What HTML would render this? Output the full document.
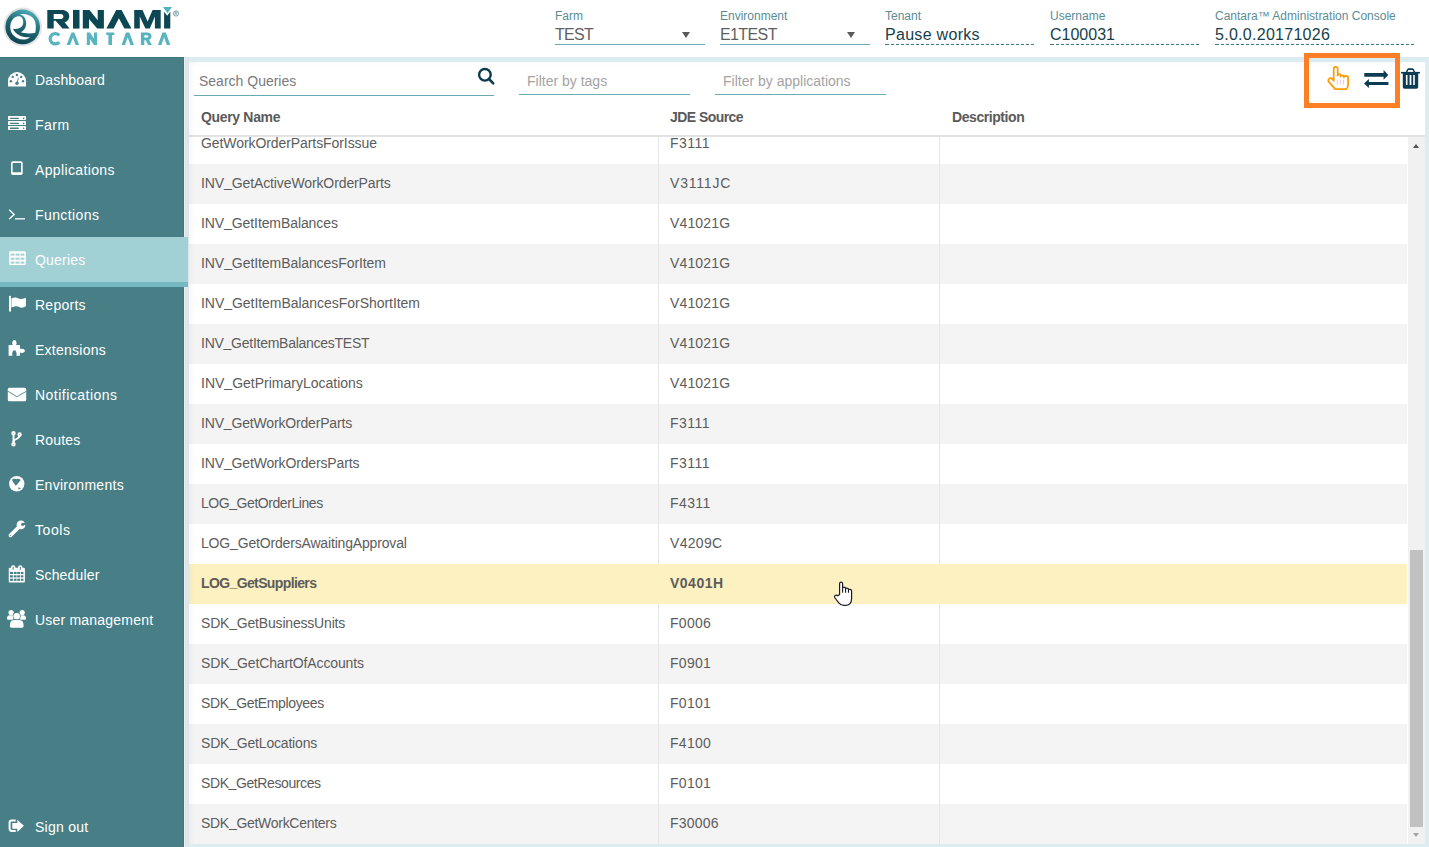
<!DOCTYPE html>
<html><head><meta charset="utf-8">
<style>
*{margin:0;padding:0;box-sizing:border-box}
html,body{width:1429px;height:847px;overflow:hidden;background:#fff;font-family:"Liberation Sans",sans-serif;position:relative}
.abs{position:absolute}
#header{left:0;top:0;width:1429px;height:57px;background:#fff}
.fld{position:absolute;top:0;height:57px;width:150px}
.fld .lbl{position:absolute;left:0;top:9px;font-size:12px;line-height:14px;color:#5b8c96;white-space:nowrap}
.fld .val{position:absolute;left:0;top:25px;font-size:16px;line-height:19px;color:#5f5f5f;white-space:nowrap}
.fld .ul{position:absolute;left:0;right:0;top:44px;height:1px;background:#69aab3}
.fld .dl{position:absolute;left:0;right:0;top:44px;height:1px;background:linear-gradient(#3f7a80,#3f7a80) 0 0/4px 1px no-repeat,repeating-linear-gradient(90deg,#3f7a80 0 3px,transparent 3px 5px) 6px 0/calc(100% - 6px) 1px no-repeat}
.fld .val.dk{color:#153f4c}
.tri{position:absolute;top:32px;width:0;height:0;border-left:4px solid transparent;border-right:4px solid transparent;border-top:6px solid #5a5a5a}

#sidebar{z-index:5;left:0;top:57px;width:184px;height:790px;background:#487f87;border-right:1px solid #3f7880;box-shadow:inset 0 1px 0 #3c757d}
.nav{position:absolute;left:0;width:184px;height:45px;color:#fff;font-size:14px;letter-spacing:0.33px}
.nav span{position:absolute;left:35px;top:15px;line-height:17px;white-space:nowrap}
.nav svg{position:absolute;left:7px;top:13px}
.nav.active{background:#a1d0d5;width:188px;height:50px;border-bottom:5px solid #74b8c2;z-index:2}

#frame{left:184px;top:57px;width:1245px;height:790px;background:#dcedf1}
#frame .lstrip{position:absolute;left:1px;top:0;width:4px;height:790px;background:#dde6e9}
#frame .lline{position:absolute;left:0;top:0;width:1px;height:790px;background:#ededed}
#shade{left:189px;top:62px;width:1236px;height:782px;pointer-events:none;box-shadow:inset 6px 4px 6px -4px rgba(0,0,0,0.045);z-index:3}
#content{left:189px;top:62px;width:1236px;height:782px;background:#fff;overflow:hidden}

.inp{position:absolute;top:0;height:34px}
.inp .ph{position:absolute;left:6px;top:11px;font-size:14px;line-height:16px;color:#7a7a7a;white-space:nowrap}
.inp .ul{position:absolute;left:0;right:0;top:33px;height:1px;background:#69aab3}
.inp .ph.lt{color:#a3a3a3}

.th{position:absolute;top:47px;font-size:14px;font-weight:bold;color:#5a5a5a;line-height:16px;white-space:nowrap}
#thline{left:0;top:73px;width:1236px;height:2px;background:#e3e3e3}

#rows{left:0;top:75px;width:1218px;height:707px;overflow:hidden}
.row{position:absolute;left:0;width:1218px;height:40px;font-size:14px;color:#5c5c5c}
.row.g{background:#f4f4f4}
.row.y{background:#fdf0c1;font-weight:bold}
.row span{position:absolute;top:11px;line-height:16px;white-space:nowrap}
.c1{left:12px}.u{font-style:normal;position:relative;top:-1px}.c2{left:481px}
.vl{position:absolute;top:0;width:1px;height:40px;background:#e6e6e6}
#sb{left:1219px;top:75px;width:17px;height:707px;background:#f1f1f1}
#thumb{left:1221px;top:488px;width:13px;height:277px;background:#c1c1c1}
</style></head>
<body>
<div id="header" class="abs">
  <!-- logo -->
  <svg class="abs" style="left:0;top:0" width="190" height="57" viewBox="0 0 190 57">
    <defs><linearGradient id="lg" x1="0.7" y1="0" x2="0.3" y2="1"><stop offset="0" stop-color="#4eb0ba"/><stop offset="0.45" stop-color="#1f6b76"/><stop offset="1" stop-color="#0d4350"/></linearGradient></defs>
    <circle cx="22.7" cy="26.8" r="19.3" fill="#e2e2e2"/>
    <circle cx="22.7" cy="26.9" r="17.3" fill="url(#lg)"/>
    <path d="M13 28.7 C15.5 34.5 22 37.8 30.2 37.2 C27.5 39.2 25 39.5 22.7 39.5 A12.5 12.5 0 0 1 10.2 27 A12.5 12.5 0 0 1 14.2 17.8 C16 16.3 18.6 15.9 20.3 16.4 C23 17.6 23.6 21 23.1 23.8 C22.3 27.5 18.5 29.6 13 28.7 Z" fill="#fff"/>
    <path d="M20 14.3 C24 13.4 30.5 14.5 33.8 19 C36 22 36.3 28 35.3 32.8 C31 33.7 25 33.7 20.8 32.3 C24.5 30.5 26.4 26.5 26.2 22.5 C26 18.5 23.5 15.6 20 14.3 Z" fill="#fff"/>
    <g fill="#0e4754">
      <path fill-rule="evenodd" d="M47.3 28.6 V9.9 H61.8 C66.3 9.9 69.3 12.5 69.3 16.2 C69.3 19.2 67.5 21.4 64.6 22.3 L69.6 28.6 H62.4 L55.6 20.8 H53.7 V28.6 Z M53.7 14.1 H60.8 C62.4 14.1 63.4 15 63.4 16.5 C63.4 18 62.4 19.1 60.8 19.1 H53.7 Z"/>
      <path d="M73 9.9 H79.5 V28.6 H73 Z"/>
      <path d="M82.8 28.6 V9.9 H89.5 L97.7 20.2 V9.9 H103.9 V28.6 H97.2 L89 18.9 V28.6 Z"/>
      <path d="M106.4 28.6 L116.2 9.9 H121.6 L131.4 28.6 H124.4 L118.9 18.3 L113.7 28.6 Z"/>
      <path d="M134.2 28.6 V9.9 H142.5 L147.6 21.6 L152.6 9.9 H160.7 V28.6 H154.9 V16.6 L149.8 28.6 H145.4 L139.8 16.6 V28.6 Z"/>
      <path d="M164.1 11.8 L167.2 15.8 L170.3 11.8 V28.6 H164.1 Z"/>
    </g>
    <path d="M163 7.1 H172 L167.5 13.2 Z" fill="#4fb3bf"/>
    <circle cx="176" cy="13.5" r="2.6" fill="none" stroke="#6a9ba4" stroke-width="0.9"/>
    <path d="M175.1 15.1 V11.9 H176.4 C177.3 11.9 177.3 13.4 176.4 13.4 H175.1 M176.2 13.4 L177.1 15.1" fill="none" stroke="#6a9ba4" stroke-width="0.7"/>
    <g fill="#58b4bf">
      <path d="M59.3 35.4 A5.2 5.2 0 1 0 59.3 42.1" fill="none" stroke="#58b4bf" stroke-width="3.2"/>
      <path d="M66.6 44.9 L71.5 32.5 H74.3 L79.2 44.9 H75.6 L72.9 37.6 L70.2 44.9 Z"/>
      <path d="M86.8 44.9 V32.5 H90 L94 38.5 V32.5 H97.1 V44.9 H93.9 L89.9 38.9 V44.9 Z"/>
      <path d="M106.2 32.6 H114.3 V35.1 H112 V44.9 H108.4 V35.1 H106.2 Z"/>
      <path d="M121.6 44.9 L126 32.5 H129.4 L133.9 44.9 H130.4 L127.7 37.3 L125 44.9 Z"/>
      <path fill-rule="evenodd" d="M140.9 44.9 V32.5 H147.3 C149.9 32.5 151.5 34 151.5 36.3 C151.5 38 150.6 39.2 149 39.8 L151.9 44.9 H148.1 L145.7 40.3 H144.3 V44.9 Z M144.3 35.2 H147 C147.9 35.2 148.3 35.7 148.3 36.4 C148.3 37.1 147.9 37.6 147 37.6 H144.3 Z"/>
      <path d="M158 44.9 L162.4 32.5 H165.9 L170.3 44.9 H166.8 L164.1 37.3 L161.4 44.9 Z"/>
    </g>
  </svg>
  <div class="fld" style="left:555px"><div class="lbl">Farm</div><div class="val" style="letter-spacing:-0.7px">TEST</div><div class="tri" style="left:127px"></div><div class="ul"></div></div>
  <div class="fld" style="left:720px"><div class="lbl">Environment</div><div class="val" style="letter-spacing:-0.6px">E1TEST</div><div class="tri" style="left:127px"></div><div class="ul"></div></div>
  <div class="fld" style="left:885px"><div class="lbl">Tenant</div><div class="val dk" style="letter-spacing:0.3px">Pause works</div><div class="dl"></div></div>
  <div class="fld" style="left:1050px"><div class="lbl">Username</div><div class="val dk">C100031</div><div class="dl"></div></div>
  <div class="fld" style="left:1215px;width:200px"><div class="lbl">Cantara™ Administration Console</div><div class="val dk" style="letter-spacing:0.28px">5.0.0.20171026</div><div class="dl"></div></div>
</div>

<div id="sidebar" class="abs">
<div class="nav" style="top:0px"><svg width="34" height="45" viewBox="0 0 34 45" style="left:0;top:0"><path d="M8 29.4 L8 24 A9 8.9 0 0 1 26 24 L26 29.4 Z" fill="#fff"/><circle cx="12.7" cy="19.9" r="1.2" fill="#487f87"/><circle cx="16.9" cy="18" r="1.2" fill="#487f87"/><circle cx="21.2" cy="19.9" r="1.2" fill="#487f87"/><circle cx="10.9" cy="24.2" r="1.2" fill="#487f87"/><circle cx="23" cy="24.2" r="1.2" fill="#487f87"/><path d="M16.6 26 L18.1 20.6 L18.8 20.8 L17.6 26.3 Z" fill="#487f87"/><circle cx="17" cy="26.2" r="1.7" fill="#487f87"/></svg><span style="letter-spacing:0.16px">Dashboard</span></div>
<div class="nav" style="top:45px"><svg width="34" height="45" viewBox="0 0 34 45" style="left:0;top:0"><rect x="8" y="14" width="18" height="4" rx="0.4" fill="#fff"/><rect x="8" y="19" width="18" height="4" rx="0.4" fill="#fff"/><rect x="8" y="24" width="18" height="4" rx="0.4" fill="#fff"/><g fill="#487f87"><rect x="9.8" y="15.7" width="9.2" height="1.4" rx="0.7"/><rect x="9.8" y="20.7" width="9.2" height="1.4" rx="0.7"/><rect x="9.8" y="25.6" width="9.2" height="1.4" rx="0.7"/><circle cx="23.6" cy="16.4" r="0.8"/><circle cx="23.6" cy="21.4" r="0.8"/><circle cx="23.6" cy="26.3" r="0.8"/></g></svg><span style="letter-spacing:0.5px">Farm</span></div>
<div class="nav" style="top:90px"><svg width="34" height="45" viewBox="0 0 34 45" style="left:0;top:0"><rect x="11.8" y="15.1" width="10.1" height="11.9" rx="1.2" fill="none" stroke="#fff" stroke-width="1.6"/><rect x="11.5" y="25.3" width="10.8" height="2.4" rx="1" fill="#fff"/></svg><span style="letter-spacing:0.36px">Applications</span></div>
<div class="nav" style="top:135px"><svg width="34" height="45" viewBox="0 0 34 45" style="left:0;top:0"><path d="M9.2 17.8 L14.2 22.4 L9.2 27" fill="none" stroke="#fff" stroke-width="1.3"/><rect x="15" y="26.2" width="10" height="1.3" fill="#fff"/></svg><span style="letter-spacing:0.41px">Functions</span></div>
<div class="nav active" style="top:180px"><svg width="34" height="45" viewBox="0 0 34 45" style="left:0;top:0"><rect x="9.2" y="14.3" width="16.6" height="13.6" rx="1.2" fill="#fff"/><g fill="#a1d0d5"><rect x="10.7" y="16.6" width="3.7" height="2"/><rect x="15.5" y="16.6" width="4.1" height="2"/><rect x="20.6" y="16.6" width="3.7" height="2"/><rect x="10.7" y="20.7" width="3.7" height="2"/><rect x="15.5" y="20.7" width="4.1" height="2"/><rect x="20.6" y="20.7" width="3.7" height="2"/><rect x="10.7" y="24.6" width="3.7" height="2"/><rect x="15.5" y="24.6" width="4.1" height="2"/><rect x="20.6" y="24.6" width="3.7" height="2"/></g></svg><span style="letter-spacing:0.2px">Queries</span></div>
<div class="nav" style="top:225px"><svg width="34" height="45" viewBox="0 0 34 45" style="left:0;top:0"><rect x="9" y="14.6" width="2" height="14.9" rx="0.5" fill="#fff"/><circle cx="10" cy="14.8" r="1.1" fill="#fff"/><path d="M11.4 16.5 C13.5 15.6 15 15.4 16.6 15.8 C18.5 16.3 19.8 17.3 21.5 17.1 C23 16.9 24.5 16.2 25.9 15.8 L25.9 24.3 C24.5 24.9 23 25.9 21.5 25.8 C19.8 25.7 18.5 24.5 16.6 24.3 C15 24.2 13.5 24.8 11.4 25.6 Z" fill="#fff"/></svg><span style="letter-spacing:0.25px">Reports</span></div>
<div class="nav" style="top:270px"><svg width="34" height="45" viewBox="0 0 34 45" style="left:0;top:0"><path d="M8.6 18 H12.9 C12.4 17.5 12.2 17 12.2 16.2 C12.2 14.6 13.2 13 14.4 13 C15.6 13 16.6 14.6 16.6 16.2 C16.6 17 16.4 17.5 15.9 18 H20 V22.1 C20.5 21.8 21 21.7 21.9 21.7 C23.5 21.7 24.9 22.5 24.9 23.8 C24.9 25.1 23.5 25.9 21.9 25.9 C21 25.9 20.5 25.8 20 25.5 V28.8 H16.2 C16.5 28.2 16.6 27.6 16.6 26.9 C16.6 24.9 15.6 23.2 14.4 23.2 C13.2 23.2 12.2 24.9 12.2 26.9 C12.2 27.6 12.3 28.2 12.6 28.8 H8.6 Z" fill="#fff"/></svg><span style="letter-spacing:0.26px">Extensions</span></div>
<div class="nav" style="top:315px"><svg width="34" height="45" viewBox="0 0 34 45" style="left:0;top:0"><rect x="7.8" y="15.7" width="18.4" height="13.6" rx="1.6" fill="#fff"/><path d="M7.8 19.2 L16.9 24.7 L26.2 19.4" fill="none" stroke="#487f87" stroke-width="0.9"/></svg><span style="letter-spacing:0.48px">Notifications</span></div>
<div class="nav" style="top:360px"><svg width="34" height="45" viewBox="0 0 34 45" style="left:0;top:0"><g fill="none" stroke="#fff"><circle cx="13.5" cy="16.3" r="1.3" stroke-width="1.8"/><circle cx="19.6" cy="17.5" r="1.3" stroke-width="1.8"/><circle cx="13.5" cy="27.3" r="1.3" stroke-width="1.8"/><path d="M13.5 17.5 V26" stroke-width="1.9"/><path d="M19.5 18.8 C19.5 22.5 13.5 21.5 13.5 25" stroke-width="1.9"/></g></svg><span style="letter-spacing:0.18px">Routes</span></div>
<div class="nav" style="top:405px"><svg width="34" height="45" viewBox="0 0 34 45" style="left:0;top:0"><circle cx="16.75" cy="21.8" r="7.7" fill="#fff"/><path d="M12.1 18 C12.8 16.6 14.8 16.4 16.5 17.2 C17.6 16.4 19.2 16.7 20.8 18 L18.2 21 C17.4 22 16.6 23 15.8 23.8 C14.6 21.7 12.4 19.6 12.1 18 Z" fill="#487f87"/><path d="M18.2 25.3 L21 26.2 L18.5 27.4 Z" fill="#487f87"/></svg><span style="letter-spacing:0.28px">Environments</span></div>
<div class="nav" style="top:450px"><svg width="34" height="45" viewBox="0 0 34 45" style="left:0;top:0"><path d="M18.6 20.4 L10.4 28.4" stroke="#fff" stroke-width="3.6" stroke-linecap="round"/><circle cx="21" cy="17.9" r="4.4" fill="#fff"/><circle cx="22.7" cy="17.3" r="1.6" fill="#487f87"/><path d="M22.7 17.3 L26.5 14 L26.8 18.8 Z" fill="#487f87"/><circle cx="10.2" cy="28.5" r="0.6" fill="#487f87"/></svg><span style="letter-spacing:0.6px">Tools</span></div>
<div class="nav" style="top:495px"><svg width="34" height="45" viewBox="0 0 34 45" style="left:0;top:0"><rect x="8.75" y="15.8" width="16.15" height="14.7" rx="1" fill="#fff"/><rect x="11" y="13.2" width="4.3" height="4" rx="2" fill="#fff"/><rect x="18.1" y="13.2" width="4.3" height="4" rx="2" fill="#fff"/><g fill="#487f87"><rect x="10" y="19.9" width="3" height="2.1"/><rect x="13.8" y="19.9" width="2.8" height="2.1"/><rect x="17.2" y="19.9" width="3" height="2.1"/><rect x="21" y="19.9" width="2.4" height="2.1"/><rect x="10" y="23.3" width="3" height="2.1"/><rect x="13.8" y="23.3" width="2.8" height="2.1"/><rect x="17.2" y="23.3" width="3" height="2.1"/><rect x="21" y="23.3" width="2.4" height="2.1"/><rect x="10" y="26.7" width="3" height="2.1"/><rect x="13.8" y="26.7" width="2.8" height="2.1"/><rect x="17.2" y="26.7" width="3" height="2.1"/><rect x="21" y="26.7" width="2.4" height="2.1"/><rect x="12.7" y="14.4" width="1" height="3.4" rx="0.5"/><rect x="19.8" y="14.4" width="1" height="3.4" rx="0.5"/></g></svg><span style="letter-spacing:0.16px">Scheduler</span></div>
<div class="nav" style="top:540px"><svg width="34" height="45" viewBox="0 0 34 45" style="left:0;top:0"><circle cx="11.1" cy="15.5" r="2.6" fill="#fff"/><circle cx="22.2" cy="15.5" r="2.6" fill="#fff"/><path d="M7 21.5 C7 19.2 8 18.2 9.8 18.2 L13.5 18.2 L13.5 22.8 L8.3 22.8 C7.5 22.8 7 22.3 7 21.5 Z" fill="#fff"/><path d="M26 21.5 C26 19.2 25 18.2 23.2 18.2 L19.5 18.2 L19.5 22.8 L24.7 22.8 C25.5 22.8 26 22.3 26 21.5 Z" fill="#fff"/><circle cx="16.7" cy="19.3" r="3.9" fill="#487f87"/><circle cx="16.7" cy="19.3" r="3.3" fill="#fff"/><path d="M9.9 29 C9.9 25 11 23 13.5 23 L19.9 23 C22.4 23 23.6 25 23.6 29 C23.6 30.2 22.9 30.8 21.8 30.8 L11.7 30.8 C10.6 30.8 9.9 30.2 9.9 29 Z" fill="#fff"/><path d="M12.6 22.6 H20.8" stroke="#487f87" stroke-width="0.6"/></svg><span style="letter-spacing:0.21px">User management</span></div>
<div class="nav" style="top:747px"><svg width="34" height="45" viewBox="0 0 34 45" style="left:0;top:0"><path d="M15.7 16.5 L11.6 16.5 C10.2 16.5 9.6 17.2 9.6 18.6 L9.6 24.8 C9.6 26.2 10.2 26.9 11.6 26.9 L15.7 26.9" fill="none" stroke="#fff" stroke-width="2"/><path d="M12.3 19 L17.3 19 L17.3 15.8 L23.9 21.85 L17.3 27.9 L17.3 24.7 L12.3 24.7 Z" fill="#fff"/></svg><span style="letter-spacing:0.26px">Sign out</span></div>
</div>

<div id="frame" class="abs"><div class="lline"></div><div class="lstrip"></div></div>
<div id="content" class="abs">
  <div class="inp" style="left:5px;top:0;width:300px"><div class="ph" style="left:5px">Search Queries</div><div class="ul" style="top:33px"></div></div>
  <svg class="abs" style="left:286px;top:4px" width="22" height="22" viewBox="0 0 22 22"><circle cx="9.9" cy="8.8" r="5.8" fill="none" stroke="#0c3c4f" stroke-width="2.4"/><path d="M14 13 L18.2 17.4" stroke="#0c3c4f" stroke-width="2.6" stroke-linecap="round"/></svg>
  <div class="inp" style="left:330px;width:171px"><div class="ph lt" style="left:8px">Filter by tags</div><div class="ul" style="top:32px"></div></div>
  <div class="inp" style="left:526px;width:171px"><div class="ph lt" style="left:8px">Filter by applications</div><div class="ul" style="top:32px"></div></div>
  <div class="th" style="left:12px;letter-spacing:-0.33px">Query Name</div>
  <div class="th" style="left:481px;letter-spacing:-0.55px">JDE Source</div>
  <div class="th" style="left:763px;letter-spacing:-0.43px">Description</div>
  <div id="thline" class="abs"></div>
  <div id="rows" class="abs">
<div class="row" style="top:-13px"><div class="vl" style="left:469px"></div><div class="vl" style="left:750px"></div><span class="c1" style="letter-spacing:-0.08px">GetWorkOrderPartsForIssue</span><span class="c2" style="letter-spacing:0.5px">F3111</span></div>
<div class="row g" style="top:27px"><div class="vl" style="left:469px"></div><div class="vl" style="left:750px"></div><span class="c1" style="letter-spacing:-0.11px">INV<i class="u">_</i>GetActiveWorkOrderParts</span><span class="c2" style="letter-spacing:0.8px">V3111JC</span></div>
<div class="row" style="top:67px"><div class="vl" style="left:469px"></div><div class="vl" style="left:750px"></div><span class="c1" style="letter-spacing:-0.09px">INV<i class="u">_</i>GetItemBalances</span><span class="c2" style="letter-spacing:0.15px">V41021G</span></div>
<div class="row g" style="top:107px"><div class="vl" style="left:469px"></div><div class="vl" style="left:750px"></div><span class="c1" style="letter-spacing:-0.07px">INV<i class="u">_</i>GetItemBalancesForItem</span><span class="c2" style="letter-spacing:0.15px">V41021G</span></div>
<div class="row" style="top:147px"><div class="vl" style="left:469px"></div><div class="vl" style="left:750px"></div><span class="c1" style="letter-spacing:-0.04px">INV<i class="u">_</i>GetItemBalancesForShortItem</span><span class="c2" style="letter-spacing:0.15px">V41021G</span></div>
<div class="row g" style="top:187px"><div class="vl" style="left:469px"></div><div class="vl" style="left:750px"></div><span class="c1" style="letter-spacing:-0.26px">INV<i class="u">_</i>GetItemBalancesTEST</span><span class="c2" style="letter-spacing:0.15px">V41021G</span></div>
<div class="row" style="top:227px"><div class="vl" style="left:469px"></div><div class="vl" style="left:750px"></div><span class="c1" style="letter-spacing:0px">INV<i class="u">_</i>GetPrimaryLocations</span><span class="c2" style="letter-spacing:0.15px">V41021G</span></div>
<div class="row g" style="top:267px"><div class="vl" style="left:469px"></div><div class="vl" style="left:750px"></div><span class="c1" style="letter-spacing:-0.17px">INV<i class="u">_</i>GetWorkOrderParts</span><span class="c2" style="letter-spacing:0.5px">F3111</span></div>
<div class="row" style="top:307px"><div class="vl" style="left:469px"></div><div class="vl" style="left:750px"></div><span class="c1" style="letter-spacing:-0.15px">INV<i class="u">_</i>GetWorkOrdersParts</span><span class="c2" style="letter-spacing:0.5px">F3111</span></div>
<div class="row g" style="top:347px"><div class="vl" style="left:469px"></div><div class="vl" style="left:750px"></div><span class="c1" style="letter-spacing:-0.44px">LOG<i class="u">_</i>GetOrderLines</span><span class="c2" style="letter-spacing:0.4px">F4311</span></div>
<div class="row" style="top:387px"><div class="vl" style="left:469px"></div><div class="vl" style="left:750px"></div><span class="c1" style="letter-spacing:-0.17px">LOG<i class="u">_</i>GetOrdersAwaitingApproval</span><span class="c2" style="letter-spacing:0.3px">V4209C</span></div>
<div class="row y" style="top:427px"><span class="c1" style="letter-spacing:-0.62px">LOG<i class="u">_</i>GetSuppliers</span><span class="c2" style="letter-spacing:0.5px">V0401H</span></div>
<div class="row" style="top:467px"><div class="vl" style="left:469px"></div><div class="vl" style="left:750px"></div><span class="c1" style="letter-spacing:-0.19px">SDK<i class="u">_</i>GetBusinessUnits</span><span class="c2" style="letter-spacing:0.3px">F0006</span></div>
<div class="row g" style="top:507px"><div class="vl" style="left:469px"></div><div class="vl" style="left:750px"></div><span class="c1" style="letter-spacing:-0.13px">SDK<i class="u">_</i>GetChartOfAccounts</span><span class="c2" style="letter-spacing:0.3px">F0901</span></div>
<div class="row" style="top:547px"><div class="vl" style="left:469px"></div><div class="vl" style="left:750px"></div><span class="c1" style="letter-spacing:-0.35px">SDK<i class="u">_</i>GetEmployees</span><span class="c2" style="letter-spacing:0.3px">F0101</span></div>
<div class="row g" style="top:587px"><div class="vl" style="left:469px"></div><div class="vl" style="left:750px"></div><span class="c1" style="letter-spacing:-0.19px">SDK<i class="u">_</i>GetLocations</span><span class="c2" style="letter-spacing:0.3px">F4100</span></div>
<div class="row" style="top:627px"><div class="vl" style="left:469px"></div><div class="vl" style="left:750px"></div><span class="c1" style="letter-spacing:-0.4px">SDK<i class="u">_</i>GetResources</span><span class="c2" style="letter-spacing:0.3px">F0101</span></div>
<div class="row g" style="top:667px"><div class="vl" style="left:469px"></div><div class="vl" style="left:750px"></div><span class="c1" style="letter-spacing:-0.29px">SDK<i class="u">_</i>GetWorkCenters</span><span class="c2" style="letter-spacing:0.2px">F30006</span></div>
  </div>
  <div id="sb" class="abs"><div style="position:absolute;left:5px;top:7px;width:0;height:0;border-left:3.5px solid transparent;border-right:3.5px solid transparent;border-bottom:4px solid #505050"></div><div style="position:absolute;left:5px;top:696px;width:0;height:0;border-left:3.5px solid transparent;border-right:3.5px solid transparent;border-top:4px solid #a3a3a3"></div></div>
  <div id="thumb" class="abs"></div>
</div>
<div id="shade" class="abs"></div>
<div class="abs" style="left:1304px;top:53px;width:96px;height:55px;border:5px solid #ff7f27"></div>

<svg class="abs" style="left:1320px;top:60px" width="34" height="36" viewBox="1320 60 34 36">
  <path d="M1333.7 80.8 V68.9 A2 2 0 0 1 1337.7 68.9 V75.5 C1337.7 74.6 1338.3 74.1 1339.15 74.1 C1340 74.1 1340.6 74.6 1340.6 75.5 V76.6 C1340.6 75.8 1341.3 75.3 1342.25 75.3 C1343.2 75.3 1343.9 75.8 1343.9 76.6 V77.2 C1343.9 76.4 1344.8 75.9 1346 75.9 C1347.3 75.9 1348.1 76.6 1348.1 77.8 V84.5 C1348.1 86.2 1347.5 87.8 1346.5 89.1 H1335.2 L1328.8 81.9 C1328 81 1328.1 79.6 1329 78.8 C1329.9 78 1331.3 78 1332.1 78.9 Z" fill="#fff" stroke="#ff9a00" stroke-width="1.7" stroke-linejoin="round"/>
  <path d="M1337.3 79.7 V84.6 M1340.4 79.7 V84.6 M1343.5 79.7 V84.6" stroke="#f9bfcf" stroke-width="0.9"/>
</svg>
<svg class="abs" style="left:1360px;top:65px" width="32" height="26" viewBox="1360 65 32 26">
  <path d="M1364.3 73 L1383.6 73 L1383.6 70.1 L1388.3 75 L1383.6 79.8 L1383.6 76.8 L1364.3 76.8 Z" fill="#0c3c54"/>
  <path d="M1388.4 82 L1368.9 82 L1368.9 78.9 L1364 83.5 L1368.9 88 L1368.9 85.1 L1388.4 85.1 Z" fill="#0c3c54"/>
</svg>
<svg class="abs" style="left:1398px;top:64px" width="26" height="28" viewBox="1398 64 26 28">
  <path d="M1405.6 72.5 L1406.8 69.8 C1407.2 68.8 1407.8 68.2 1408.8 68.2 L1412.2 68.2 C1413.2 68.2 1413.8 68.8 1414.2 69.8 L1415.4 72.5 L1413.8 72.5 L1412.9 70.4 C1412.7 70 1412.5 69.9 1412.1 69.9 L1408.9 69.9 C1408.5 69.9 1408.3 70 1408.1 70.4 L1407.2 72.5 Z" fill="#0c3c54"/>
  <rect x="1401" y="71.9" width="19" height="1.6" fill="#0c3c54"/>
  <path d="M1402.8 73 L1418.2 73 L1418.2 87 C1418.2 88 1417.5 88.7 1416.5 88.7 L1404.5 88.7 C1403.5 88.7 1402.8 88 1402.8 87 Z" fill="#0c3c54"/>
  <rect x="1405.9" y="75" width="1.6" height="10" fill="#fff"/><rect x="1409.6" y="75" width="1.8" height="10" fill="#fff"/><rect x="1413.2" y="75" width="1.6" height="10" fill="#fff"/>
</svg>
<svg class="abs" style="left:830px;top:578px" width="26" height="32" viewBox="830 578 26 32">
  <path d="M839.6 594.5 L839.6 583.8 C839.6 582.8 840.2 582.2 841.1 582.2 C842 582.2 842.6 582.8 842.6 583.8 L842.6 588.3 C842.8 587.6 843.4 587.2 844.1 587.2 C844.9 587.2 845.5 587.7 845.6 588.6 C845.9 588.2 846.4 588.2 847 588.2 C847.8 588.2 848.4 588.8 848.5 589.6 C848.8 589.4 849.3 589.3 849.9 589.3 C850.9 589.3 851.6 590 851.6 591 L851.6 598.5 C851.6 602.8 849.2 605.4 845.2 605.4 L843.8 605.4 C841.6 605.4 840.2 604.6 838.8 602.8 L835 598 C834.3 597.1 834.4 596 835.2 595.4 C836 594.8 837 595 837.8 595.8 Z" fill="#fff" stroke="#1c1c28" stroke-width="1.2" stroke-linejoin="round"/>
  <path d="M842.6 588.5 V592.8 M845.6 589 V592.8 M848.5 590 V592.8" stroke="#1c1c28" stroke-width="1.1"/>
</svg>
</body></html>
